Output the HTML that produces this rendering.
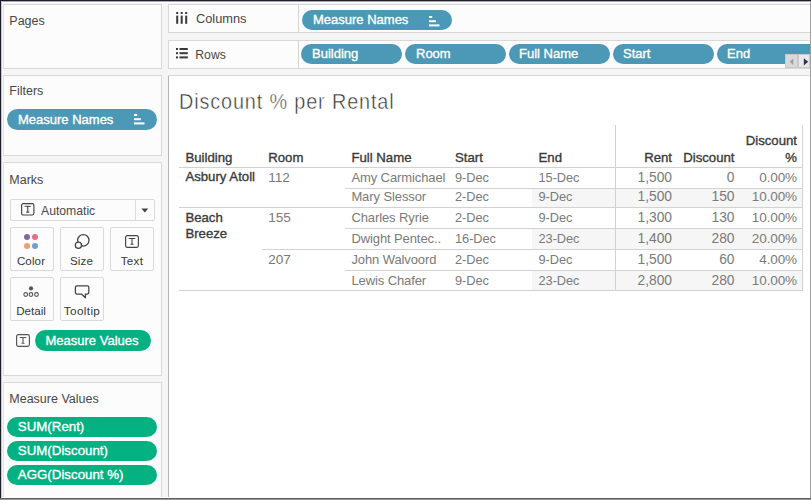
<!DOCTYPE html>
<html><head><meta charset="utf-8"><style>
html,body{margin:0;padding:0;width:811px;height:500px;overflow:hidden;background:#f5f5f5}
body{position:relative;font-family:"Liberation Sans", sans-serif}
.a{position:absolute}
.t{position:absolute;white-space:nowrap}
</style></head><body>
<div class="a" style="left:0px;top:0px;width:811px;height:500px;background:#f5f5f5;"></div>
<div class="a" style="left:3px;top:4px;width:159px;height:65px;background:#fcfcfd;box-sizing:border-box;border:1px solid #d8d8d8;border-left-color:#e4e4e4;"></div>
<div class="a" style="left:3px;top:75px;width:159px;height:81px;background:#fcfcfd;box-sizing:border-box;border:1px solid #d8d8d8;border-left-color:#e4e4e4;"></div>
<div class="a" style="left:3px;top:162px;width:159px;height:214px;background:#fcfcfd;box-sizing:border-box;border:1px solid #d8d8d8;border-left-color:#e4e4e4;"></div>
<div class="a" style="left:3px;top:382px;width:159px;height:123px;background:#fcfcfd;box-sizing:border-box;border:1px solid #d8d8d8;border-left-color:#e4e4e4;"></div>
<div class="a" style="left:168px;top:4px;width:652px;height:29px;background:#fcfcfd;box-sizing:border-box;border:1px solid #d8d8d8;"></div>
<div class="a" style="left:168px;top:40px;width:652px;height:29px;background:#fcfcfd;box-sizing:border-box;border:1px solid #d8d8d8;"></div>
<div class="a" style="left:298px;top:5px;width:1px;height:27px;background:#d4d4d4;"></div>
<div class="a" style="left:298px;top:41px;width:1px;height:27px;background:#d4d4d4;"></div>
<div class="a" style="left:168px;top:75px;width:652px;height:430px;background:#ffffff;box-sizing:border-box;border:1px solid #d8d8d8;"></div>
<div class="a" style="left:168px;top:76px;width:1px;height:422px;background:#b4b4b4;"></div>
<div class="a" style="left:302px;top:10px;width:150px;height:20px;background:#4b99b6;border-radius:10.0px;"></div>
<svg class="a" style="left:429px;top:15.5px" width="12" height="11"><rect x="0" y="0" width="3.2" height="2" fill="#ffffff"/><rect x="0" y="4.2" width="6.8" height="2" fill="#ffffff"/><rect x="0" y="8.4" width="10.5" height="2" fill="#ffffff"/></svg>
<div class="a" style="left:301px;top:44px;width:101px;height:20px;background:#4b99b6;border-radius:10.0px;"></div>
<div class="a" style="left:405px;top:44px;width:101px;height:20px;background:#4b99b6;border-radius:10.0px;"></div>
<div class="a" style="left:509px;top:44px;width:101px;height:20px;background:#4b99b6;border-radius:10.0px;"></div>
<div class="a" style="left:613px;top:44px;width:101px;height:20px;background:#4b99b6;border-radius:10.0px;"></div>
<div class="a" style="left:717px;top:44px;width:143px;height:20px;background:#4b99b6;border-radius:10.0px;"></div>
<div class="a" style="left:785px;top:54px;width:13px;height:14px;background:#d9d9d9;box-sizing:border-box;border:1px solid #c8c8c8;"></div>
<div class="a" style="left:798px;top:54px;width:12px;height:14px;background:#e8e8e8;box-sizing:border-box;border:1px solid #c8c8c8;"></div>
<svg class="a" style="left:785px;top:54px" width="26" height="14"><path d="M8.3 4.6 L4.5 7.7 L8.3 11 Z" fill="#a0a0a0"/><path d="M18.8 4.2 L23.2 7.7 L18.8 11.5 Z" fill="#2a3650"/></svg>
<div class="a" style="left:810px;top:0px;width:1px;height:500px;background:#a0a0a0;"></div>
<div class="a" style="left:0px;top:0px;width:811px;height:1px;background:#1c1f2a;"></div>
<div class="a" style="left:1px;top:1px;width:810px;height:1px;background:#a8a8ae;"></div>
<div class="a" style="left:1px;top:2px;width:809px;height:1px;background:#ffffff;"></div>
<div class="a" style="left:0px;top:0px;width:1px;height:500px;background:#1c1f2a;"></div>
<div class="a" style="left:1px;top:1px;width:1px;height:497px;background:#c4c8ce;"></div>
<div class="a" style="left:0px;top:498px;width:811px;height:1px;background:#5e5e5e;"></div>
<div class="a" style="left:0px;top:499px;width:811px;height:1px;background:#9a9a9a;"></div>
<div class="a" style="left:1px;top:497px;width:809px;height:1px;background:#ffffff;"></div>
<svg class="a" style="left:176px;top:12px" width="12" height="12"><rect x="0.2" y="0" width="2" height="2" fill="#3a3a3a"/><rect x="4.7" y="0" width="2" height="2" fill="#3a3a3a"/><rect x="9.2" y="0" width="2" height="2" fill="#3a3a3a"/><rect x="0.2" y="3.6" width="2" height="8.2" fill="#3a3a3a"/><rect x="4.7" y="3.6" width="2" height="8.2" fill="#3a3a3a"/><rect x="9.2" y="3.6" width="2" height="8.2" fill="#3a3a3a"/></svg>
<svg class="a" style="left:176px;top:48px" width="13" height="11"><rect x="0" y="0" width="2" height="2" fill="#3a3a3a"/><rect x="0" y="4.2" width="2" height="2" fill="#3a3a3a"/><rect x="0" y="8.4" width="2" height="2" fill="#3a3a3a"/><rect x="3.5" y="0" width="8.3" height="2" fill="#3a3a3a"/><rect x="3.5" y="4.2" width="8.3" height="2" fill="#3a3a3a"/><rect x="3.5" y="8.4" width="8.3" height="2" fill="#3a3a3a"/></svg>
<div class="a" style="left:7px;top:109px;width:150px;height:21px;background:#4b99b6;border-radius:10.5px;"></div>
<svg class="a" style="left:134px;top:114.4px" width="12" height="11"><rect x="0" y="0" width="3.2" height="2" fill="#ffffff"/><rect x="0" y="4.2" width="6.8" height="2" fill="#ffffff"/><rect x="0" y="8.4" width="10.5" height="2" fill="#ffffff"/></svg>
<div class="a" style="left:10px;top:199px;width:145px;height:22px;background:#fcfcfd;box-sizing:border-box;border:1px solid #d9d9d9;border-radius:2px;"></div>
<div class="a" style="left:135px;top:200px;width:1px;height:20px;background:#dcdcdc;"></div>
<svg class="a" style="left:141px;top:208px" width="8" height="5"><path d="M0.3 0.5 L7.3 0.5 L3.8 4.5Z" fill="#444"/></svg>
<svg class="a" style="left:20.6px;top:203px" width="14.5" height="13.6"><rect x="0.6" y="0.6" width="12.3" height="11.4" rx="1.8" fill="none" stroke="#444" stroke-width="1.15"/><path d="M4.05 2.9 V3.6999999999999997 M4.05 3.3 H9.45 M9.45 2.9 V3.6999999999999997 M6.75 3.3 V9.1 M5.25 9.1 H8.25" stroke="#444" stroke-width="1.1" fill="none"/></svg>
<div class="a" style="left:10px;top:227px;width:44px;height:44px;background:#fcfcfd;box-sizing:border-box;border:1px solid #d9d9d9;border-radius:2px;"></div>
<div class="a" style="left:60px;top:227px;width:44px;height:44px;background:#fcfcfd;box-sizing:border-box;border:1px solid #d9d9d9;border-radius:2px;"></div>
<div class="a" style="left:110px;top:227px;width:44px;height:44px;background:#fcfcfd;box-sizing:border-box;border:1px solid #d9d9d9;border-radius:2px;"></div>
<div class="a" style="left:10px;top:277px;width:44px;height:44px;background:#fcfcfd;box-sizing:border-box;border:1px solid #d9d9d9;border-radius:2px;"></div>
<div class="a" style="left:60px;top:277px;width:44px;height:44px;background:#fcfcfd;box-sizing:border-box;border:1px solid #d9d9d9;border-radius:2px;"></div>
<div class="a" style="left:23.8px;top:234.3px;width:6px;height:6px;border-radius:3px;background:#7f6aa0"></div>
<div class="a" style="left:32.2px;top:234.3px;width:6px;height:6px;border-radius:3px;background:#e46f86"></div>
<div class="a" style="left:23.8px;top:242.7px;width:6px;height:6px;border-radius:3px;background:#f09e6e"></div>
<div class="a" style="left:32.2px;top:242.7px;width:6px;height:6px;border-radius:3px;background:#6f9ed0"></div>
<svg class="a" style="left:72px;top:233px" width="20" height="18"><circle cx="11.3" cy="7.3" r="5.7" fill="#fcfcfd" stroke="#444" stroke-width="1.25"/><circle cx="6.4" cy="12.2" r="3.1" fill="#fcfcfd" stroke="#444" stroke-width="1.25"/></svg>
<svg class="a" style="left:125px;top:235px" width="15" height="14"><rect x="0.6" y="0.6" width="12.8" height="11.8" rx="1.8" fill="none" stroke="#444" stroke-width="1.15"/><path d="M4.3 3.1 V3.9 M4.3 3.5 H9.7 M9.7 3.1 V3.9 M7.0 3.5 V9.3 M5.5 9.3 H8.5" stroke="#444" stroke-width="1.1" fill="none"/></svg>
<svg class="a" style="left:22px;top:284px" width="20" height="14"><circle cx="9" cy="4.4" r="2.1" fill="#555"/><circle cx="3.7" cy="10.5" r="1.85" fill="none" stroke="#555" stroke-width="1.1"/><circle cx="9" cy="10.5" r="1.85" fill="none" stroke="#555" stroke-width="1.1"/><circle cx="14.5" cy="10.5" r="1.85" fill="none" stroke="#555" stroke-width="1.1"/></svg>
<svg class="a" style="left:74px;top:285px" width="17" height="15"><path d="M2.8 0.9 H13.4 Q14.8 0.9 14.8 2.3 V7.6 Q14.8 9 13.4 9 H11.4 V12.8 L7.5 9 H2.8 Q1.4 9 1.4 7.6 V2.3 Q1.4 0.9 2.8 0.9 Z" fill="none" stroke="#444" stroke-width="1.25" stroke-linejoin="round"/></svg>
<svg class="a" style="left:16px;top:334px" width="15" height="14"><rect x="0.6" y="0.6" width="12.8" height="11.8" rx="1.8" fill="none" stroke="#555" stroke-width="1.15"/><path d="M4.3 3.1 V3.9 M4.3 3.5 H9.7 M9.7 3.1 V3.9 M7.0 3.5 V9.3 M5.5 9.3 H8.5" stroke="#555" stroke-width="1.1" fill="none"/></svg>
<div class="a" style="left:35px;top:330px;width:116px;height:21px;background:#03b181;border-radius:10.5px;"></div>
<div class="a" style="left:7px;top:417px;width:150px;height:20px;background:#03b181;border-radius:10.0px;"></div>
<div class="a" style="left:7px;top:441px;width:150px;height:20px;background:#03b181;border-radius:10.0px;"></div>
<div class="a" style="left:7px;top:465px;width:150px;height:20px;background:#03b181;border-radius:10.0px;"></div>
<div class="a" style="left:532px;top:188px;width:270px;height:19px;background:#f6f6f6;"></div>
<div class="a" style="left:532px;top:229px;width:270px;height:20px;background:#f6f6f6;"></div>
<div class="a" style="left:532px;top:271px;width:270px;height:19px;background:#f6f6f6;"></div>
<div class="a" style="left:615px;top:125px;width:1px;height:165px;background:#d2d2d2;"></div>
<div class="a" style="left:802px;top:125px;width:1px;height:166px;background:#d2d2d2;"></div>
<div class="a" style="left:179px;top:167px;width:623px;height:1px;background:#d2d2d2;"></div>
<div class="a" style="left:179px;top:207px;width:623px;height:1px;background:#d2d2d2;"></div>
<div class="a" style="left:179px;top:290px;width:623px;height:1px;background:#d2d2d2;"></div>
<div class="a" style="left:262px;top:249px;width:540px;height:1px;background:#d2d2d2;"></div>
<div class="a" style="left:345px;top:188px;width:457px;height:1px;background:#d2d2d2;"></div>
<div class="a" style="left:345px;top:228px;width:457px;height:1px;background:#d2d2d2;"></div>
<div class="a" style="left:345px;top:270px;width:457px;height:1px;background:#d2d2d2;"></div>
<svg class="a" style="left:0;top:0;font-family:&quot;Liberation Sans&quot;, sans-serif" width="811" height="500">
<text x="9.3" y="24.7" font-size="12.5" fill="#474747">Pages</text>
<text x="9.3" y="94.7" font-size="12.5" fill="#474747">Filters</text>
<text x="9.3" y="183.5" font-size="12.5" fill="#474747">Marks</text>
<text x="9.3" y="403.3" font-size="12.5" fill="#474747">Measure Values</text>
<text x="196" y="23.3" font-size="12.8" fill="#474747">Columns</text>
<text x="195.3" y="58.7" font-size="12.2" fill="#474747">Rows</text>
<text x="313" y="24" font-size="13" fill="#ffffff" stroke="#ffffff" stroke-width="0.35">Measure Names</text>
<text x="312" y="58" font-size="13" fill="#ffffff" stroke="#ffffff" stroke-width="0.35">Building</text>
<text x="416" y="58" font-size="13" fill="#ffffff" stroke="#ffffff" stroke-width="0.35">Room</text>
<text x="519" y="58" font-size="13" fill="#ffffff" stroke="#ffffff" stroke-width="0.35">Full Name</text>
<text x="623" y="58" font-size="13" fill="#ffffff" stroke="#ffffff" stroke-width="0.35">Start</text>
<text x="727" y="58" font-size="13" fill="#ffffff" stroke="#ffffff" stroke-width="0.35">End</text>
<text x="18" y="124" font-size="13" fill="#ffffff" stroke="#ffffff" stroke-width="0.35">Measure Names</text>
<text x="41" y="214.6" font-size="12.2" fill="#4a4a4a">Automatic</text>
<text x="31" y="265" font-size="11.6" fill="#383838" text-anchor="middle" letter-spacing="0.1">Color</text>
<text x="81.5" y="265" font-size="11.6" fill="#383838" text-anchor="middle" letter-spacing="0.1">Size</text>
<text x="132" y="265" font-size="11.6" fill="#383838" text-anchor="middle" letter-spacing="0.35">Text</text>
<text x="31" y="315.2" font-size="11.6" fill="#383838" text-anchor="middle" letter-spacing="0">Detail</text>
<text x="82" y="315.2" font-size="11.8" fill="#383838" text-anchor="middle" letter-spacing="0.35">Tooltip</text>
<text x="45.5" y="345.3" font-size="13" fill="#ffffff" stroke="#ffffff" stroke-width="0.35">Measure Values</text>
<text x="17.8" y="431" font-size="13.3" fill="#ffffff" stroke="#ffffff" stroke-width="0.35">SUM(Rent)</text>
<text x="17.8" y="455" font-size="13.3" fill="#ffffff" stroke="#ffffff" stroke-width="0.35">SUM(Discount)</text>
<text x="17.8" y="479" font-size="13.3" fill="#ffffff" stroke="#ffffff" stroke-width="0.35">AGG(Discount %)</text>
<text x="179" y="109.4" font-size="21.6" fill="#303030" stroke="#fff" stroke-width="0.5" letter-spacing="0.92" transform="translate(179,0) scale(0.92,1) translate(-179,0)">Discount % per Rental</text>
<text x="185.4" y="162.2" font-size="13.2" fill="#3a3a3a" stroke="#3a3a3a" stroke-width="0.35">Building</text>
<text x="268.2" y="162.2" font-size="13.2" fill="#3a3a3a" stroke="#3a3a3a" stroke-width="0.35">Room</text>
<text x="351.4" y="162.2" font-size="13.2" fill="#3a3a3a" stroke="#3a3a3a" stroke-width="0.35">Full Name</text>
<text x="455" y="162.2" font-size="13.2" fill="#3a3a3a" stroke="#3a3a3a" stroke-width="0.35">Start</text>
<text x="538.5" y="162.2" font-size="13.2" fill="#3a3a3a" stroke="#3a3a3a" stroke-width="0.35">End</text>
<text x="672" y="162.2" font-size="13.2" fill="#3a3a3a" text-anchor="end" stroke="#3a3a3a" stroke-width="0.35">Rent</text>
<text x="734.5" y="162.2" font-size="13.2" fill="#3a3a3a" text-anchor="end" stroke="#3a3a3a" stroke-width="0.35">Discount</text>
<text x="797" y="145" font-size="13.2" fill="#3a3a3a" text-anchor="end" stroke="#3a3a3a" stroke-width="0.35">Discount</text>
<text x="797" y="162.2" font-size="13.2" fill="#3a3a3a" text-anchor="end" stroke="#3a3a3a" stroke-width="0.35">%</text>
<text x="185.4" y="180.6" font-size="13.2" fill="#3a3a3a" stroke="#3a3a3a" stroke-width="0.35">Asbury Atoll</text>
<text x="185.4" y="221.6" font-size="13.2" fill="#3a3a3a" stroke="#3a3a3a" stroke-width="0.35">Beach</text>
<text x="185.4" y="238" font-size="13.2" fill="#3a3a3a" stroke="#3a3a3a" stroke-width="0.35">Breeze</text>
<text x="268.2" y="181.8" font-size="13.6" fill="#7a7a7a">112</text>
<text x="268.2" y="222.2" font-size="13.6" fill="#7a7a7a">155</text>
<text x="268.2" y="263.8" font-size="13.6" fill="#7a7a7a">207</text>
<text x="351.4" y="182" font-size="13" fill="#7a7a7a" letter-spacing="-0.1">Amy Carmichael</text>
<text x="455" y="182" font-size="12.8" fill="#7a7a7a" letter-spacing="-0.05">9-Dec</text>
<text x="538.5" y="182" font-size="12.8" fill="#7a7a7a" letter-spacing="-0.05">15-Dec</text>
<text x="672" y="182" font-size="13.8" fill="#7a7a7a" text-anchor="end">1,500</text>
<text x="734.5" y="182" font-size="13.8" fill="#7a7a7a" text-anchor="end">0</text>
<text x="797" y="182" font-size="13.5" fill="#7a7a7a" text-anchor="end" letter-spacing="-0.1">0.00%</text>
<text x="351.4" y="201.2" font-size="13" fill="#7a7a7a" letter-spacing="-0.1">Mary Slessor</text>
<text x="455" y="201.2" font-size="12.8" fill="#7a7a7a" letter-spacing="-0.05">2-Dec</text>
<text x="538.5" y="201.2" font-size="12.8" fill="#7a7a7a" letter-spacing="-0.05">9-Dec</text>
<text x="672" y="201.2" font-size="13.8" fill="#7a7a7a" text-anchor="end">1,500</text>
<text x="734.5" y="201.2" font-size="13.8" fill="#7a7a7a" text-anchor="end">150</text>
<text x="797" y="201.2" font-size="13.5" fill="#7a7a7a" text-anchor="end" letter-spacing="-0.1">10.00%</text>
<text x="351.4" y="222.2" font-size="13" fill="#7a7a7a" letter-spacing="-0.1">Charles Ryrie</text>
<text x="455" y="222.2" font-size="12.8" fill="#7a7a7a" letter-spacing="-0.05">2-Dec</text>
<text x="538.5" y="222.2" font-size="12.8" fill="#7a7a7a" letter-spacing="-0.05">9-Dec</text>
<text x="672" y="222.2" font-size="13.8" fill="#7a7a7a" text-anchor="end">1,300</text>
<text x="734.5" y="222.2" font-size="13.8" fill="#7a7a7a" text-anchor="end">130</text>
<text x="797" y="222.2" font-size="13.5" fill="#7a7a7a" text-anchor="end" letter-spacing="-0.1">10.00%</text>
<text x="351.4" y="243" font-size="13" fill="#7a7a7a" letter-spacing="-0.1">Dwight Pentec..</text>
<text x="455" y="243" font-size="12.8" fill="#7a7a7a" letter-spacing="-0.05">16-Dec</text>
<text x="538.5" y="243" font-size="12.8" fill="#7a7a7a" letter-spacing="-0.05">23-Dec</text>
<text x="672" y="243" font-size="13.8" fill="#7a7a7a" text-anchor="end">1,400</text>
<text x="734.5" y="243" font-size="13.8" fill="#7a7a7a" text-anchor="end">280</text>
<text x="797" y="243" font-size="13.5" fill="#7a7a7a" text-anchor="end" letter-spacing="-0.1">20.00%</text>
<text x="351.4" y="263.8" font-size="13" fill="#7a7a7a" letter-spacing="-0.1">John Walvoord</text>
<text x="455" y="263.8" font-size="12.8" fill="#7a7a7a" letter-spacing="-0.05">2-Dec</text>
<text x="538.5" y="263.8" font-size="12.8" fill="#7a7a7a" letter-spacing="-0.05">9-Dec</text>
<text x="672" y="263.8" font-size="13.8" fill="#7a7a7a" text-anchor="end">1,500</text>
<text x="734.5" y="263.8" font-size="13.8" fill="#7a7a7a" text-anchor="end">60</text>
<text x="797" y="263.8" font-size="13.5" fill="#7a7a7a" text-anchor="end" letter-spacing="-0.1">4.00%</text>
<text x="351.4" y="285.2" font-size="13" fill="#7a7a7a" letter-spacing="-0.1">Lewis Chafer</text>
<text x="455" y="285.2" font-size="12.8" fill="#7a7a7a" letter-spacing="-0.05">9-Dec</text>
<text x="538.5" y="285.2" font-size="12.8" fill="#7a7a7a" letter-spacing="-0.05">23-Dec</text>
<text x="672" y="285.2" font-size="13.8" fill="#7a7a7a" text-anchor="end">2,800</text>
<text x="734.5" y="285.2" font-size="13.8" fill="#7a7a7a" text-anchor="end">280</text>
<text x="797" y="285.2" font-size="13.5" fill="#7a7a7a" text-anchor="end" letter-spacing="-0.1">10.00%</text>
</svg>
</body></html>
